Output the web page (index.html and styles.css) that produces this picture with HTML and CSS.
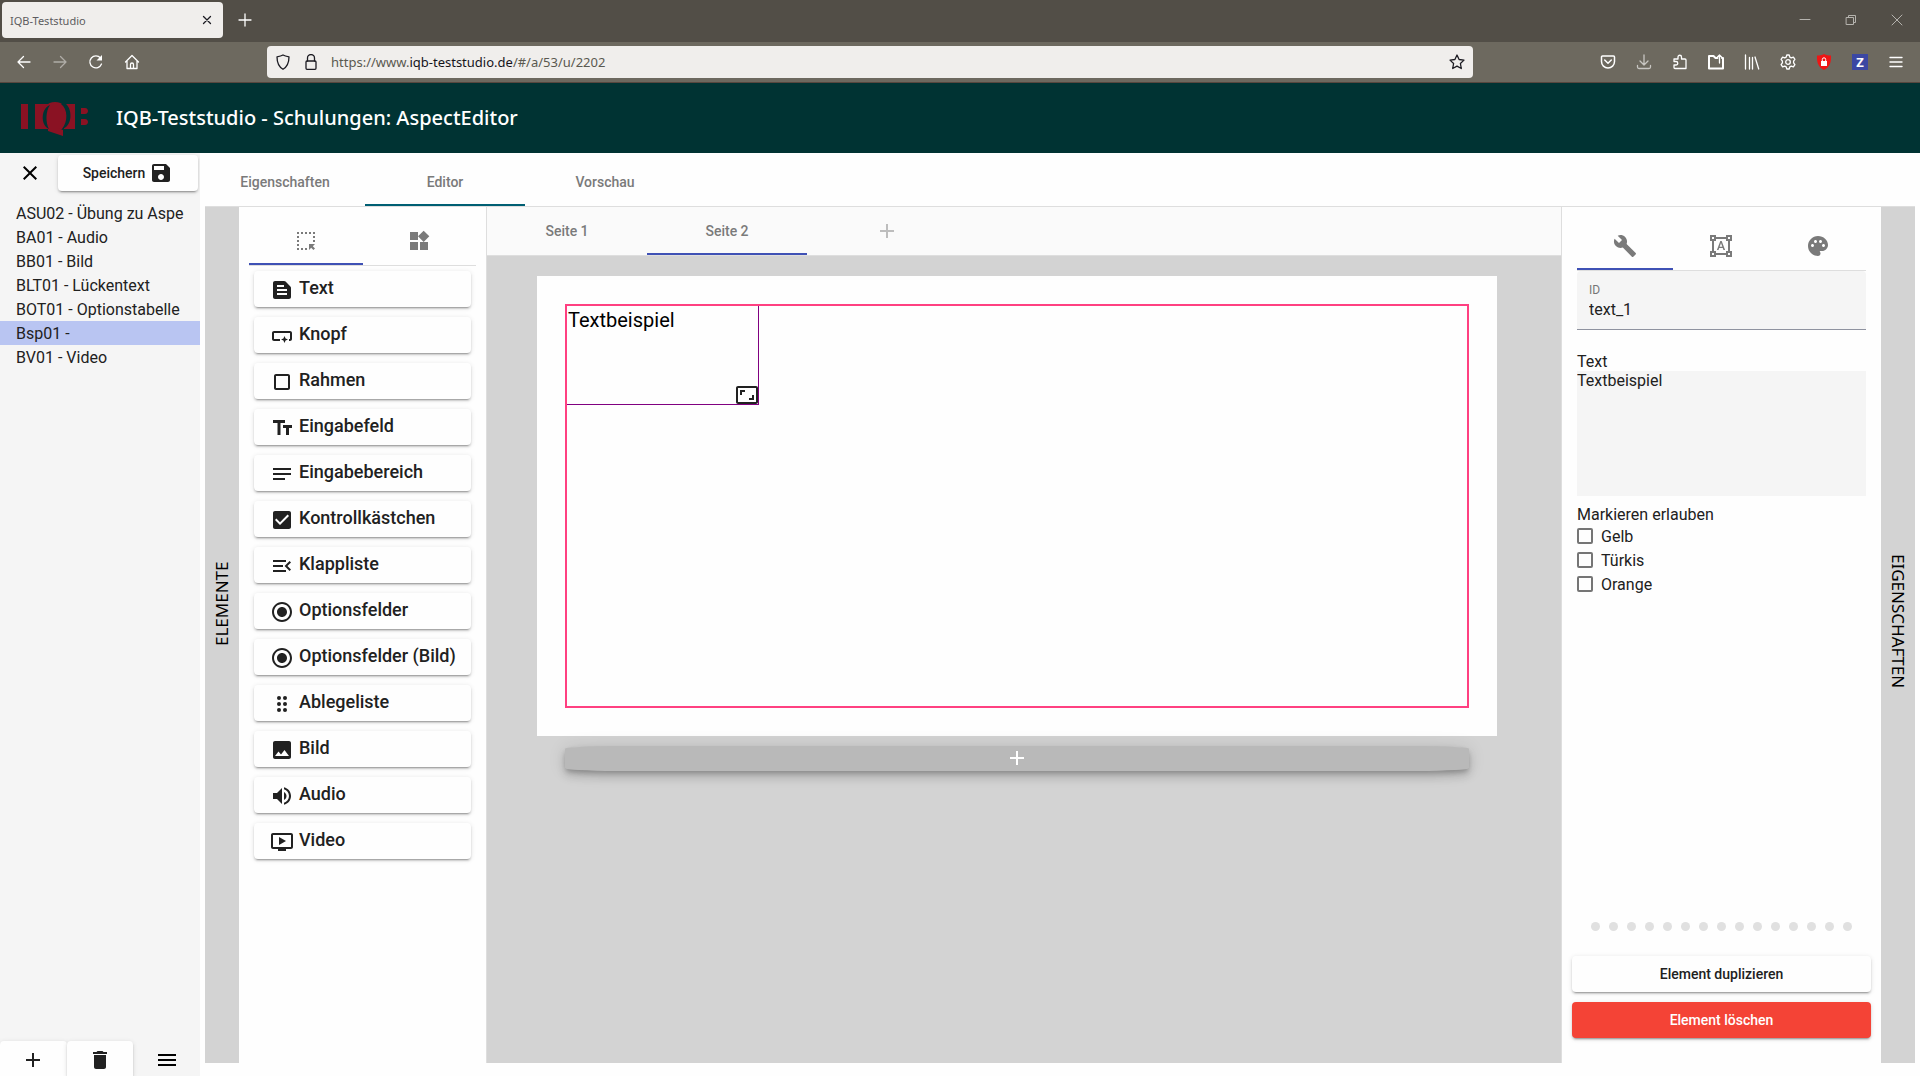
FILE: index.html
```html
<!DOCTYPE html>
<html lang="de">
<head>
<meta charset="utf-8">
<title>IQB-Teststudio</title>
<link rel="stylesheet" href="styles.css">
</head>
<body>
<div class="window">
  <div class="tabstrip">
    <div class="browser-tab">
      <span>IQB-Teststudio</span>
      <button class="plain" aria-label="Tab schließen"><svg width="16" height="16" viewBox="0 0 16 16" class="line dark"><path d="M4.5 4.5l7 7M11.5 4.5l-7 7"/></svg></button>
    </div>
    <button class="plain new-tab" aria-label="Neuer Tab"><svg width="16" height="16" viewBox="0 0 16 16" class="line light"><path d="M8 2v12M2 8h12"/></svg></button>
    <div class="window-controls">
      <button class="plain" aria-label="Minimieren"><svg width="12" height="12" viewBox="0 0 12 12" class="line grey"><path d="M1 5.500h10"/></svg></button>
      <button class="plain" aria-label="Verkleinern"><svg width="12" height="12" viewBox="0 0 12 12" class="line grey"><path d="M1.500 3.500h7v7h-7zM3.500 3.500v-2h7v7h-2"/></svg></button>
      <button class="plain" aria-label="Schließen"><svg width="12" height="12" viewBox="0 0 12 12" class="line grey"><path d="M1 1l10 10M11 1l-10 10"/></svg></button>
    </div>
  </div>
  <div class="toolbar">
    <div class="nav-buttons">
      <button class="plain" aria-label="Zurück"><svg width="16" height="16" viewBox="0 0 16 16" class="line light"><path d="M14 8H2M7.500 2.500L2 8l5.500 5.500"/></svg></button>
      <button class="plain dim" aria-label="Vor"><svg width="16" height="16" viewBox="0 0 16 16" class="line light"><path d="M2 8h12M8.500 2.500L14 8l-5.500 5.500"/></svg></button>
      <button class="plain" aria-label="Neu laden"><svg width="16" height="16" viewBox="0 0 16 16" class="line light"><path d="M13.500 10A6 6 0 1 1 12.500 4"/><path d="M14 1v5.500H8.500z" fill="#fff" stroke="none"/></svg></button>
      <button class="plain" aria-label="Startseite"><svg width="16" height="16" viewBox="0 0 16 16" class="line light"><path d="M1.500 8L8 1.500 14.500 8M3 7v7.500h10V7M6.500 14.500v-4a1.500 1.500 0 0 1 3 0v4"/></svg></button>
    </div>
    <div class="urlbar">
      <svg width="16" height="16" viewBox="0 0 16 16" class="line dark"><path d="M8 1c2 1.200 4 1.500 6 1.800C14 8 13 12.500 8 15.300 3 12.500 2 8 2 2.800 4 2.500 6 2.200 8 1z"/></svg>
      <svg width="16" height="16" viewBox="0 0 16 16" class="line dark"><path d="M4.500 7V4a3.500 3.500 0 0 1 7 0v3"/><rect x="3" y="7" width="10" height="8.300" rx="1"/></svg>
      <span class="url">https://www.<b>iqb-teststudio.de</b>/#/a/53/u/2202</span>
      <svg width="16" height="16" viewBox="0 0 16 16" class="line dark"><path d="M8 1l2.100 4.500 4.900.6-3.600 3.400.9 5L8 12.100 3.700 14.500l.9-5L1 6.100l4.900-.6z"/></svg>
    </div>
    <div class="extensions">
      <svg width="16" height="16" viewBox="0 0 16 16" class="line light"><path d="M2.500 2h11a1 1 0 0 1 1 1v4.500a6.500 6.500 0 0 1-13 0V3a1 1 0 0 1 1-1zM4.700 6L8 9.200 11.300 6" stroke-width="1.500"/></svg>
      <svg width="16" height="16" viewBox="0 0 16 16" class="line pale"><path d="M8 1v10M4 7l4 4 4-4M1.500 11.500V13a1.500 1.500 0 0 0 1.500 1.500h10a1.500 1.500 0 0 0 1.500-1.500v-1.500"/></svg>
      <svg width="16" height="16" viewBox="0 0 16 16" class="line light"><path d="M2 7.500V5h4V3a1.700 1.700 0 0 1 3.500 0v2H13a1 1 0 0 1 1 1v8.500H3a1 1 0 0 1-1-1V11h2a1.700 1.700 0 0 0 0-3.500z"/></svg>
      <svg width="16" height="16" viewBox="0 0 16 16" class="line light"><path d="M9.500 4H7.500l-2-2H1v12.500h14V4h-1" stroke-width="2"/><path d="M11.500 9V1M9 3.500L11.500 1l2.500 2.500"/></svg>
      <svg width="16" height="16" viewBox="0 0 16 16" class="line light"><path d="M1.500 1v14M5.500 3.500v11.500M8.500 3.500v11.500M11 3l3.700 12"/></svg>
      <svg width="16" height="16" viewBox="0 0 16 16" class="line light"><path d="M6.800 1h2.400l.6 2.100 1.500.8 2.100-.8 1.500 2.200-1.300 1.800v1.800l1.300 1.800-1.500 2.200-2.100-.8-1.500.8L9.200 15H6.800l-.6-2.100-1.500-.8-2.100.8-1.500-2.200 1.300-1.800V7.100L1.100 5.300l1.500-2.200 2.100.8 1.500-.8z"/><circle cx="8" cy="8" r="2.300"/></svg>
      <svg width="16" height="16" viewBox="0 0 16 16"><path fill="#ee1515" d="M8 0c2 1.200 4.600 1.500 7 1.500C15.300 8 14 13 8 16 2 13 .7 8 1 1.500 3.400 1.500 6 1.200 8 0z"/><path fill="#fff" d="M5 7h6v5H5z"/><path d="M6.300 7V5.500a1.700 1.700 0 0 1 3.400 0V7" fill="none" stroke="#fff"/></svg>
      <span class="z-badge">Z</span>
      <svg width="16" height="16" viewBox="0 0 16 16" class="line light"><path d="M2 3.500h12M2 8h12M2 12.500h12" stroke-width="1.400"/></svg>
    </div>
  </div>

  <header class="app-header">
    <svg width="70" height="38" viewBox="0 0 70 38" fill="#8a1223"><path d="M1 5h7v25H1z"/><path d="M15 5h13v25H15zM44 5h11v25H44z"/><ellipse cx="35" cy="17.500" rx="14" ry="14.500"/><path d="M28 29h9l6 2v6l-15-5z"/><path fill="#003333" d="M30 6C21 9 20 26 29 30 25.500 24 25.500 12 30 6zM41 5c7 5 7 18 1 25 10-2 11-19 4-25z"/><path d="M61 9h4c4 0 4 6 0 6h-4zM61 20h4c4 0 4 6 0 6h-4z"/></svg>
    <h1>IQB-Teststudio - Schulungen: AspectEditor</h1>
  </header>

  <div class="workspace">
    <aside class="sidebar">
      <div class="sidebar-top">
        <button class="plain" aria-label="Schließen"><svg class="mi" viewBox="0 0 24 24"><path d="M19 6.410L17.590 5 12 10.590 6.410 5 5 6.410 10.590 12 5 17.590 6.410 19 12 13.410 17.590 19 19 17.590 13.410 12z"/></svg></button>
        <button class="raised save">Speichern<svg class="mi" viewBox="0 0 24 24"><path d="M17 3H5c-1.110 0-2 .9-2 2v14c0 1.100.89 2 2 2h14c1.100 0 2-.9 2-2V7l-4-4zm-5 16c-1.660 0-3-1.340-3-3s1.340-3 3-3 3 1.340 3 3-1.340 3-3 3zm3-10H5V5h10v4z"/></svg></button>
      </div>
      <nav class="units">
        <a href="#">ASU02 - Übung zu Aspe</a>
        <a href="#">BA01 - Audio</a>
        <a href="#">BB01 - Bild</a>
        <a href="#">BLT01 - Lückentext</a>
        <a href="#">BOT01 - Optionstabelle</a>
        <a href="#" class="current">Bsp01 -</a>
        <a href="#">BV01 - Video</a>
      </nav>
      <div class="sidebar-bottom">
        <button class="raised" aria-label="Hinzufügen"><svg class="mi" viewBox="0 0 24 24"><path d="M19 13h-6v6h-2v-6H5v-2h6V5h2v6h6v2z"/></svg></button>
        <button class="raised" aria-label="Löschen"><svg class="mi" viewBox="0 0 24 24"><path d="M6 19c0 1.100.9 2 2 2h8c1.100 0 2-.9 2-2V7H6v12zM19 4h-3.500l-1-1h-5l-1 1H5v2h14V4z"/></svg></button>
        <button class="plain" aria-label="Menü"><svg class="mi" viewBox="0 0 24 24"><path d="M3 18h18v-2H3v2zm0-5h18v-2H3v2zm0-7v2h18V6H3z"/></svg></button>
      </div>
    </aside>

    <main class="main">
      <nav class="tabs main-tabs">
        <button>Eigenschaften</button><button class="active">Editor</button><button>Vorschau</button>
      </nav>
      <div class="editor">
        <div class="strip strip-left">ELEMENTE</div>
        <section class="elements">
          <div class="tabs icon-tabs">
            <button class="active" aria-label="Elemente"><svg class="mi" viewBox="0 0 24 24"><path d="M3 3h2v2H3zM7 3h2v2H7zM11 3h2v2h-2zM15 3h2v2h-2zM19 3h2v2h-2zM3 7h2v2H3zM3 11h2v2H3zM3 15h2v2H3zM3 19h2v2H3zM7 19h2v2H7zM11 19h2v2h-2zM19 7h2v2h-2zM19 11h2v2h-2zM15 15h6l-2.200 2.200L21 19.400 19.400 21l-2.200-2.200L15 21z"/></svg></button>
            <button aria-label="Bausteine"><svg class="mi" viewBox="0 0 24 24"><path d="M13 13v8h8v-8h-8zM3 21h8v-8H3v8zM3 3v8h8V3H3zm13.660-1.310L11 7.340 16.660 13l5.660-5.660-5.660-5.650z"/></svg></button>
          </div>
          <div class="element-list">
            <button class="raised"><svg class="mi" viewBox="0 0 24 24"><path d="M20.410 8.410l-4.830-4.830c-.37-.37-.88-.58-1.410-.58H5c-1.100 0-2 .9-2 2v14c0 1.100.9 2 2 2h14c1.100 0 2-.9 2-2V9.830c0-.53-.21-1.040-.59-1.420zM7 7h7v2H7V7zm10 10H7v-2h10v2zm0-4H7v-2h10v2z"/></svg>Text</button>
            <button class="raised"><svg class="mi" viewBox="0 0 24 24"><path d="M22 9v6c0 1.100-.9 2-2 2h-1v-2h1V9H4v6h6v2H4c-1.100 0-2-.9-2-2V9c0-1.100.9-2 2-2h16c1.100 0 2 .9 2 2zm-7.500 10l1.090-2.410L18 15.500l-2.410-1.090L14.500 12l-1.090 2.410L11 15.500l2.410 1.090L14.500 19z"/></svg>Knopf</button>
            <button class="raised"><svg class="mi" viewBox="0 0 24 24"><path d="M18 4H6c-1.100 0-2 .9-2 2v12c0 1.100.9 2 2 2h12c1.100 0 2-.9 2-2V6c0-1.100-.9-2-2-2zm0 14H6V6h12v12z"/></svg>Rahmen</button>
            <button class="raised"><svg class="mi" viewBox="0 0 24 24"><path d="M3 4v3h4.500v12h3V7H15V4H3zm19 5h-9v3h3v7h3v-7h3V9z"/></svg>Eingabefeld</button>
            <button class="raised"><svg class="mi" viewBox="0 0 24 24"><path d="M15 16H3v2h12v-2zM21 11H3v2h18v-2zM3 8h18V6H3v2z"/></svg>Eingabebereich</button>
            <button class="raised"><svg class="mi" viewBox="0 0 24 24"><path d="M19 3H5c-1.110 0-2 .9-2 2v14c0 1.100.89 2 2 2h14c1.110 0 2-.9 2-2V5c0-1.100-.89-2-2-2zm-9 14l-5-5 1.410-1.410L10 14.170l7.590-7.590L19 8l-9 9z"/></svg>Kontrollkästchen</button>
            <button class="raised"><svg class="mi" viewBox="0 0 24 24"><path d="M3 18h13v-2H3v2zm0-5h10v-2H3v2zm0-7v2h13V6H3zm18 9.590L17.420 12 21 8.410 19.590 7l-5 5 5 5L21 15.590z"/></svg>Klappliste</button>
            <button class="raised"><svg class="mi" viewBox="0 0 24 24"><path d="M12 7c-2.760 0-5 2.240-5 5s2.240 5 5 5 5-2.240 5-5-2.240-5-5-5zm0-5C6.480 2 2 6.480 2 12s4.480 10 10 10 10-4.480 10-10S17.520 2 12 2zm0 18c-4.420 0-8-3.580-8-8s3.580-8 8-8 8 3.580 8 8-3.580 8-8 8z"/></svg>Optionsfelder</button>
            <button class="raised"><svg class="mi" viewBox="0 0 24 24"><path d="M12 7c-2.760 0-5 2.240-5 5s2.240 5 5 5 5-2.240 5-5-2.240-5-5-5zm0-5C6.480 2 2 6.480 2 12s4.480 10 10 10 10-4.480 10-10S17.520 2 12 2zm0 18c-4.420 0-8-3.580-8-8s3.580-8 8-8 8 3.580 8 8-3.580 8-8 8z"/></svg>Optionsfelder (Bild)</button>
            <button class="raised"><svg class="mi" viewBox="0 0 24 24"><g><circle cx="9" cy="6" r="2"/><circle cx="15" cy="6" r="2"/><circle cx="9" cy="12" r="2"/><circle cx="15" cy="12" r="2"/><circle cx="9" cy="18" r="2"/><circle cx="15" cy="18" r="2"/></g></svg>Ablegeliste</button>
            <button class="raised"><svg class="mi" viewBox="0 0 24 24"><path d="M21 19V5c0-1.100-.9-2-2-2H5c-1.100 0-2 .9-2 2v14c0 1.100.9 2 2 2h14c1.100 0 2-.9 2-2zM8.500 13.500l2.500 3.010L14.500 12l4.500 6H5l3.500-4.500z"/></svg>Bild</button>
            <button class="raised"><svg class="mi" viewBox="0 0 24 24"><path d="M3 9v6h4l5 5V4L7 9H3zm13.500 3c0-1.770-1.020-3.290-2.500-4.030v8.050c1.480-.73 2.500-2.250 2.500-4.020zM14 3.230v2.060c2.890.86 5 3.540 5 6.710s-2.110 5.850-5 6.710v2.060c4.010-.91 7-4.490 7-8.770s-2.990-7.860-7-8.770z"/></svg>Audio</button>
            <button class="raised"><svg class="mi" viewBox="0 0 24 24"><path d="M21 3H3c-1.110 0-2 .89-2 2v12c0 1.100.89 2 2 2h5v2h8v-2h5c1.100 0 1.990-.9 1.990-2L23 5c0-1.110-.9-2-2-2zm0 14H3V5h18v12zm-5-6l-7 4V7z"/></svg>Video</button>
          </div>
        </section>
        <section class="canvas">
          <div class="tabs page-tabs">
            <button>Seite 1</button><button class="active">Seite 2</button><button class="add" aria-label="Seite hinzufügen"><svg class="mi" viewBox="0 0 24 24"><path d="M19 13h-6v6h-2v-6H5v-2h6V5h2v6h6v2z"/></svg></button>
          </div>
          <div class="stage">
            <div class="page">
              <div class="section-frame">
                <div class="text-element">Textbeispiel
                  <svg class="mi resize" viewBox="0 0 24 24"><path d="M19 12h-2v3h-3v2h5v-5zM7 9h3V7H5v5h2V9zm14-6H3c-1.100 0-2 .9-2 2v14c0 1.100.9 2 2 2h18c1.100 0 2-.9 2-2V5c0-1.100-.9-2-2-2zm0 16.010H3V4.990h18v14.020z"/></svg>
                </div>
              </div>
            </div>
            <button class="add-section" aria-label="Abschnitt hinzufügen"><svg class="mi" viewBox="0 0 24 24"><path d="M19 13h-6v6h-2v-6H5v-2h6V5h2v6h6v2z"/></svg></button>
          </div>
        </section>
        <section class="properties">
          <div class="tabs icon-tabs tall">
            <button class="active" aria-label="Eigenschaften"><svg class="mi" viewBox="0 0 24 24"><path d="M22.700 19l-9.100-9.100c.9-2.300.4-5-1.500-6.900-2-2-5-2.400-7.400-1.300L9 6 6 9 1.600 4.700C.4 7.100.9 10.100 2.900 12.100c1.900 1.900 4.600 2.400 6.900 1.500l9.100 9.100c.4.4 1 .4 1.400 0l2.300-2.300c.5-.4.5-1.100.1-1.400z"/></svg></button>
            <button aria-label="Position"><svg class="mi" viewBox="0 0 24 24"><path d="M23 7V1h-6v2H7V1H1v6h2v10H1v6h6v-2h10v2h6v-6h-2V7h2zM3 3h2v2H3V3zm2 18H3v-2h2v2zm12-2H7v-2H5V7h2V5h10v2h2v10h-2v2zm4 2h-2v-2h2v2zM19 5V3h2v2h-2zm-5.270 9h-3.490l-.73 2H7.890l3.400-9h1.400l3.410 9h-1.630l-.74-2zm-3.040-1.260h2.610L12 8.910l-1.310 3.830z"/></svg></button>
            <button aria-label="Gestaltung"><svg class="mi" viewBox="0 0 24 24"><path d="M12 2C6.490 2 2 6.490 2 12s4.490 10 10 10c1.380 0 2.500-1.120 2.500-2.500 0-.61-.23-1.200-.64-1.670-.08-.1-.13-.21-.13-.33 0-.28.22-.5.500-.5H16c3.310 0 6-2.690 6-6 0-4.960-4.490-9-10-9zm5.500 11c-.83 0-1.500-.67-1.500-1.500s.67-1.500 1.500-1.500 1.500.67 1.500 1.500-.67 1.500-1.500 1.500zm-3-4c-.83 0-1.500-.67-1.500-1.500S13.670 6 14.500 6s1.500.67 1.500 1.500S15.330 9 14.500 9zM5 11.500c0-.83.67-1.500 1.500-1.500s1.500.67 1.500 1.500S7.330 13 6.500 13 5 12.330 5 11.500zm6-4c0 .83-.67 1.500-1.500 1.500S8 8.330 8 7.500 8.670 6 9.500 6s1.500.67 1.500 1.500z"/></svg></button>
          </div>
          <div class="fields">
            <div class="id-field">
              <label for="element-id">ID</label>
              <input id="element-id" type="text" value="text_1">
            </div>
            <label class="text-label" for="element-text">Text</label>
            <textarea id="element-text">Textbeispiel</textarea>
            <fieldset>
              <legend>Markieren erlauben</legend>
              <label><input type="checkbox">Gelb</label>
              <label><input type="checkbox">Türkis</label>
              <label><input type="checkbox">Orange</label>
            </fieldset>
          </div>
          <div class="dots"><i></i><i></i><i></i><i></i><i></i><i></i><i></i><i></i><i></i><i></i><i></i><i></i><i></i><i></i><i></i></div>
          <div class="actions">
            <button class="raised">Element duplizieren</button>
            <button class="raised warn">Element löschen</button>
          </div>
        </section>
        <div class="strip strip-right">EIGENSCHAFTEN</div>
      </div>
    </main>
  </div>
</div>
</body>
</html>
```
FILE: styles.css
```css
* { box-sizing: border-box; }
body { margin: 0; font-family: Roboto, sans-serif; font-size: 16px; color: #212121; background: #fefefe; }
button { font: inherit; color: inherit; border: 0; padding: 0; background: none; }
svg { display: block; flex: none; }
.window { display: flex; flex-direction: column; min-height: 100vh; }
.plain { display: flex; }
.mi { width: 24px; height: 24px; fill: currentColor; }
.line { fill: none; stroke-width: 1.3; stroke-linejoin: round; stroke-linecap: round; }
.light { stroke: #fff; }
.pale { stroke: #c8c6c2; }
.dark { stroke: #1c1b22; }
.grey { stroke: #b5b3ae; stroke-width: 1; }
.dim { opacity: .45; }

/* browser window */
.tabstrip { display: flex; align-items: center; height: 42px; padding: 0 17px 2px 2px; background: #524e47; font-family: "Noto Sans", sans-serif; }
.browser-tab { display: flex; align-items: center; justify-content: space-between; width: 221px; height: 36px; padding: 0 8px; border-radius: 4px; background: #f0eeec; color: #5d5c60; font-size: 11px; }
.new-tab { margin-left: 14px; }
.window-controls { display: flex; gap: 34px; margin-left: auto; }
.toolbar { display: flex; align-items: center; justify-content: space-between; height: 41px; padding: 0 16px; background: #6d695f; border-bottom: 1px solid #57473f; font-family: "Noto Sans", sans-serif; }
.nav-buttons { display: flex; gap: 20px; width: 251px; }
.urlbar { display: flex; align-items: center; gap: 12px; flex: 1; max-width: 1206px; height: 32px; padding: 0 8px; border-radius: 4px; background: #f0eeec; }
.url { flex: 1; font-size: 13px; line-height: 20px; color: #5a5950; }
.url b { font-weight: 400; color: #15141a; }
.extensions { display: flex; gap: 20px; margin-left: auto; }
.z-badge { width: 16px; height: 16px; background: #3b47a3; color: #fff; font-size: 13px; font-weight: 700; line-height: 16px; text-align: center; }

/* application */
.app-header { display: flex; align-items: center; gap: 26px; height: 70px; padding: 0 20px; background: #003333; color: #fff; }
.app-header h1 { margin: 0; font-size: 20px; line-height: 26px; font-weight: 500; font-family: "Noto Sans", sans-serif; }
.workspace { display: flex; flex: 1; }
.raised { border-radius: 4px; background: #fefefe; font-weight: 500; box-shadow: 0 3px 1px -2px rgba(0,0,0,.2), 0 2px 2px 0 rgba(0,0,0,.14), 0 1px 5px 0 rgba(0,0,0,.12); }

.sidebar { display: flex; flex-direction: column; width: 200px; background: #f5f5f5; overflow: hidden; }
.sidebar-top { display: flex; align-items: center; justify-content: space-between; height: 40px; padding: 0 2px 0 18px; color: #000; }
.save { display: flex; align-items: center; justify-content: center; gap: 4px; width: 140px; height: 36px; font-size: 14px; color: #212121; }
.units { display: flex; flex-direction: column; padding-top: 8px; }
.units a { height: 24px; padding-left: 16px; line-height: 26px; color: #212121; text-decoration: none; white-space: nowrap; }
.units .current { background: #b9c5f2; }
.sidebar-bottom { display: flex; margin-top: auto; height: 35px; }
.sidebar-bottom button { display: flex; align-items: center; justify-content: center; width: 67px; height: 38px; }
.sidebar-bottom .plain { color: #000; }

.main { display: flex; flex-direction: column; flex: 1; min-width: 0; padding: 0 5px 13px; }
.tabs { display: flex; border-bottom: 1px solid #dedede; }
.tabs button { display: flex; align-items: center; justify-content: center; width: 160px; padding-top: 2px; font-size: 14px; font-weight: 500; color: #7a7a7a; border-bottom: 2px solid transparent; }
.tabs .active { border-bottom-color: #3f51b5; }
.main-tabs { height: 54px; }
.main-tabs button { padding-top: 6px; }
.main-tabs .active { border-bottom-color: #005f73; }
.editor { display: flex; flex: 1; }
.strip { display: flex; align-items: center; justify-content: center; width: 34px; background: #d3d3d3; color: #000; font-family: "Noto Sans", sans-serif; font-size: 17px; line-height: 34px; writing-mode: vertical-rl; }
.strip-left { transform: rotate(180deg); padding-top: 62px; }
.strip-right { padding-bottom: 28px; }

.elements { width: 248px; border-right: 1px solid #dedede; padding: 10px 10px 0; }
.icon-tabs { height: 49px; }
.icon-tabs button { flex: 1; width: auto; }
.element-list { display: flex; flex-direction: column; gap: 10px; padding: 5px; }
.element-list button { display: flex; align-items: center; gap: 5px; height: 36px; padding-left: 16px; font-size: 18px; line-height: 34px; white-space: nowrap; }
.element-list button { align-items: flex-start; }
.element-list .mi { margin-top: 7px; }

.canvas { display: flex; flex-direction: column; flex: 1; min-width: 0; background: #d3d3d3; }
.page-tabs { height: 49px; background: #fafafa; }
.page-tabs .add { color: #bdbdbd; }
.stage { display: flex; flex-direction: column; align-items: center; padding: 20px 14px 0 0; }
.page { width: 960px; max-width: 100%; padding: 28px; background: #fefefe; }
.section-frame { height: 404px; border: 2px solid #ff4081; }
.text-element { position: relative; width: 192px; height: 99px; padding: 2px 1px; border: solid #800080; border-width: 0 1px 1px 0; font-size: 20px; line-height: 24px; color: #000; }
.resize { position: absolute; right: -1px; bottom: -3px; color: #212121; }
.add-section { display: flex; align-items: center; justify-content: center; width: 904px; max-width: 100%; height: 25px; margin-top: 10px; padding-bottom: 2px; border-radius: 50px / 3px; background: #b9b9b9; color: #fff; box-shadow: 0 3px 5px -1px rgba(0,0,0,.2), 0 6px 10px 0 rgba(0,0,0,.14), 0 1px 18px 0 rgba(0,0,0,.12); }

.properties { display: flex; flex-direction: column; width: 320px; border-left: 1px solid #dedede; padding: 15px 10px 25px; }
.tall { margin: 0 5px; }
.fields { display: flex; flex-direction: column; padding: 0 5px; }
.id-field { display: flex; flex-direction: column; height: 59px; padding: 11px 12px 0; border-radius: 4px 4px 0 0; border-bottom: 1px solid #8f93a0; background: #f5f5f5; }
.id-field label { font-size: 12px; line-height: 16px; color: #757575; }
.id-field input { border: 0; padding: 0; background: none; font: inherit; height: 22px; color: #212121; }
.text-label { margin-top: 22px; line-height: 19px; }
textarea { height: 125px; padding: 0; border: 0; resize: none; background: #f5f5f5; font: inherit; line-height: 19px; color: #212121; }
fieldset { margin: 10px 0 0; padding: 0; border: 0; }
legend { padding: 0; line-height: 18px; }
fieldset label { display: flex; align-items: center; gap: 8px; height: 24px; }
fieldset input { appearance: none; width: 16px; height: 16px; margin: 0; border: 2px solid #757575; border-radius: 2px; }
.dots { display: flex; justify-content: center; gap: 9px; margin-top: auto; }
.dots i { width: 9px; height: 9px; border-radius: 50%; background: #e0e0e0; }
.actions { display: flex; flex-direction: column; gap: 10px; margin-top: 25px; }
.actions button { height: 36px; font-size: 14px; }
.actions .warn { background: #f44336; color: #fff; }
```
